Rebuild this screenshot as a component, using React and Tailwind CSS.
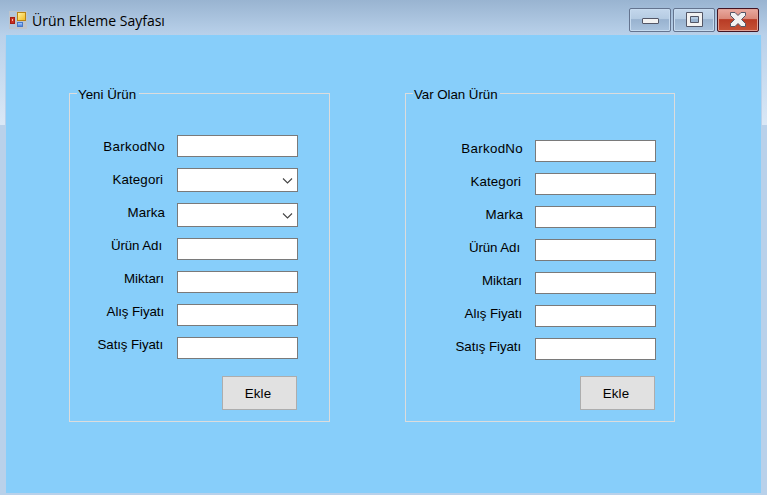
const LABELS = [
  { text: 'BarkodNo', end: 'pr-0', track: 'tracking-[0.3px]' },
  { text: 'Kategori', end: 'pr-[2px]', track: 'tracking-[0.1px]' },
  { text: 'Marka', end: 'pr-0', track: 'tracking-[0.1px]' },
  { text: 'Ürün Adı', end: 'pr-[3px]', track: 'tracking-[-0.1px]' },
  { text: 'Miktarı', end: 'pr-[1px]', track: 'tracking-[0px]' },
  { text: 'Alış Fiyatı', end: 'pr-[1px]', track: 'tracking-[-0.1px]' },
  { text: 'Satış Fiyatı', end: 'pr-[2px]', track: 'tracking-[-0.1px]' },
];

function Labels({ className }) {
  return (
    <div className={`flex flex-col items-end ${className}`}>
      {LABELS.map((l) => (
        <label key={l.text} className={`h-[33px] whitespace-nowrap leading-4 ${l.end} ${l.track}`}>
          {l.text}
        </label>
      ))}
    </div>
  );
}

function TextBox() {
  return <input className="block h-[22px] w-[121px] shrink-0 border border-[#7a7a7a] bg-white px-1 outline-none" />;
}

function ComboBox() {
  return (
    <div className="flex h-6 w-[121px] shrink-0 items-center justify-end border border-[#7a7a7a] bg-white pr-[4px]">
      <svg width="11" height="7" viewBox="0 0 11 7" fill="none" stroke="#444" strokeWidth="1.1">
        <path d="M1 1.5 L5.5 6 L10 1.5" />
      </svg>
    </div>
  );
}

function GroupBox({ title, className, titleClass, children }) {
  return (
    <div className={`flex h-[329px] flex-col border border-t-0 border-[#dcdcdc] ${className}`}>
      <div className="flex h-4 shrink-0 items-start">
        <div className="h-px w-[7px] bg-[#dcdcdc]" />
        <span className={`-mt-[6px] whitespace-nowrap leading-4 ${titleClass}`}>{title}</span>
        <div className="h-px flex-1 bg-[#dcdcdc]" />
      </div>
      {children}
    </div>
  );
}

function AddButton({ className }) {
  return (
    <button className={`block h-[34px] w-[75px] shrink-0 border border-[#adadad] bg-[#e1e1e1] pr-[3px] pt-[2px] leading-4 tracking-[0.2px] ${className}`}>
      Ekle
    </button>
  );
}

function FormIcon() {
  return (
    <svg width="18" height="18" viewBox="0 0 18 18" shapeRendering="crispEdges">
      <defs>
        <linearGradient id="gold" x2="1" y2="1"><stop stopColor="#fff1a0" /><stop offset="1" stopColor="#f3bd25" /></linearGradient>
        <linearGradient id="blue" x2="0" y2="1"><stop stopColor="#a9cbff" /><stop offset="1" stopColor="#4d83dc" /></linearGradient>
      </defs>
      <path d="M0 0H18V18H0Z" fill="#bfc5cc" />
      <path d="M1 1H7V5H1ZM1 13H7V17H1Z" fill="#b2c6db" />
      <rect x="1" y="6" width="5" height="7" fill="#a51d14" />
      <rect x="2" y="7" width="3" height="5" fill="#c93022" />
      <rect x="3" y="8" width="1" height="2" fill="#f6b9ac" />
      <rect x="8" y="1" width="9" height="9" fill="#b98412" />
      <rect x="9" y="2" width="7" height="7" fill="url(#gold)" />
      <rect x="8" y="11" width="6" height="5" fill="#4777c8" />
      <rect x="9" y="12" width="4" height="3" fill="url(#blue)" />
    </svg>
  );
}

function CaptionButton({ close, label, children }) {
  const tone = close
    ? 'border-[#431422] bg-[linear-gradient(to_bottom,#e9aaa0_0%,#d98778_46%,#b83b25_48%,#c65337_100%)] shadow-[inset_0_0_0_1px_#e1a195]'
    : 'border-[#64748f] bg-[linear-gradient(to_bottom,#c4d7ec_0%,#b4cbe2_46%,#98b2cf_48%,#aac3de_100%)] shadow-[inset_0_0_0_1px_#c7dbef]';
  return (
    <button aria-label={label} className={`flex h-6 w-[42px] items-center justify-center rounded-[2px] border ${tone}`}>
      {children}
    </button>
  );
}

export default function App() {
  return (
    <div className="flex h-[495px] w-[767px] flex-col overflow-hidden bg-[#b9d1ea] font-['Liberation_Sans',Arial,sans-serif] text-[13.33px] text-black">
      <header className="flex h-[35px] shrink-0 items-start justify-between bg-[linear-gradient(to_bottom,#99b4d1,#b9d1ea)] pl-[9px] pr-2">
        <div className="flex pt-[11px]">
          <FormIcon />
          <h1 className="ml-[5px] whitespace-nowrap font-['Open_Sans','Noto_Sans',sans-serif] text-[14px] leading-5 tracking-[0px]">
            Ürün Ekleme Sayfası
          </h1>
        </div>
        <div className="flex gap-[2px] pt-2">
          <CaptionButton label="Minimize">
            <svg width="17" height="16" viewBox="0 0 17 16">
              <rect x=".5" y="6.5" width="16" height="5" rx=".5" fill="#f2f2f2" stroke="#535666" />
            </svg>
          </CaptionButton>
          <CaptionButton label="Maximize">
            <svg width="17" height="16" viewBox="0 0 17 16">
              <path d="M.5 .5H16.5V14.5H.5ZM4.5 4.5V10.5H12.5V4.5Z" fill="#f2f2f2" fillRule="evenodd" stroke="#535666" />
            </svg>
          </CaptionButton>
          <CaptionButton label="Close" close>
            <svg width="18" height="16" viewBox="0 0 18 16">
              <path d="M1.5 .5H6L9 3.5L12 .5H16.5V3.5L12.5 7.5L16.5 11.5V14.5H12L9 11.5L6 14.5H1.5V11.5L5.5 7.5L1.5 3.5Z" fill="#f2f2f2" stroke="#535666" />
            </svg>
          </CaptionButton>
        </div>
      </header>
      <div className="flex h-[458px]">
        <div className="h-[90px] w-[5px] bg-[linear-gradient(to_bottom,#b9d1ea,#dae8f6)]" />
        <div className="w-px bg-[#b9d1ea]" />
        <main className="flex w-[755px] items-start bg-[#87cefa] pl-[63px] pt-[58px]">
          <GroupBox title="Yeni Ürün" className="w-[261px]" titleClass="pl-[1px] pr-[3px]">
            <div className="flex">
              <Labels className="w-[95px] pt-[30px]" />
              <div className="ml-3 flex flex-col pt-[26px]">
                <TextBox />
                <div className="flex flex-col gap-[11px] py-[11px]">
                  <ComboBox />
                  <ComboBox />
                </div>
                <div className="flex flex-col gap-[11px]">
                  <TextBox />
                  <TextBox />
                  <TextBox />
                  <TextBox />
                </div>
                <AddButton className="ml-[45px] mt-[17px]" />
              </div>
            </div>
          </GroupBox>
          <GroupBox title="Var Olan Ürün" className="ml-[75px] w-[270px]" titleClass="pl-[1px] pr-[2px] tracking-[-0.05px]">
            <div className="flex">
              <Labels className="w-[117px] pt-[32px]" />
              <div className="ml-3 flex flex-col pt-[31px]">
                <div className="flex flex-col gap-[11px]">
                  {LABELS.map((l) => (
                    <TextBox key={l.text} />
                  ))}
                </div>
                <AddButton className="ml-[45px] mt-4" />
              </div>
            </div>
          </GroupBox>
        </main>
        <div className="w-px bg-[#b9d1ea]" />
        <div className="h-[90px] w-[5px] bg-[linear-gradient(to_bottom,#b9d1ea,#dae8f6)]" />
      </div>
    </div>
  );
}
